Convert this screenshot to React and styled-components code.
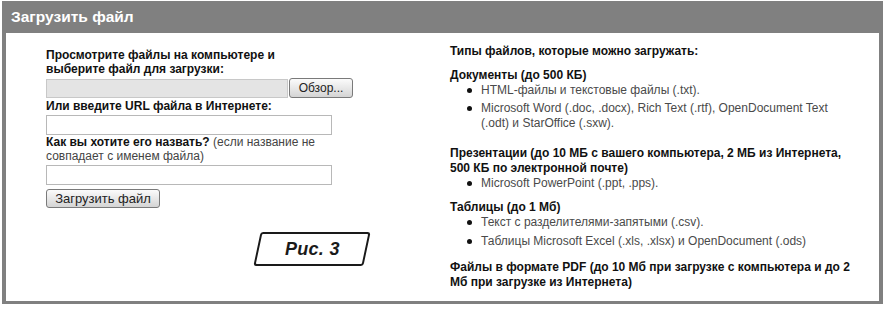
import React from "react";
import styled, { createGlobalStyle } from "styled-components";

const Global = createGlobalStyle`
  html, body { margin: 0; padding: 0; background: #fff; }
  body { font-family: "Liberation Sans", Arial, sans-serif; color: #111; }
`;

const Frame = styled.div`
  width: 881px;
  margin: 1px 0 0 2px;
  background: #808080;
  display: flex;
  flex-direction: column;
`;

const Header = styled.div`
  height: 32px;
  display: flex;
  align-items: center;
  padding-left: 9px;
  color: #fff;
  font-weight: bold;
  font-size: 15.5px;
`;

const Body = styled.div`
  border: solid #808080;
  border-width: 0 4px 3px 4px;
  background: #fff;
  height: 268px;
  display: grid;
  grid-template-columns: 404px 1fr;
  padding-left: 40px;
  overflow: hidden;
`;

const Left = styled.div`
  padding-top: 15px;
  display: flex;
  flex-direction: column;
  align-items: flex-start;
  width: 310px;
`;

const Label = styled.div`
  font-size: 12px;
  line-height: 14px;
  font-weight: bold;
  color: #111;
  margin-top: ${(p) => p.$mt || 0}px;
`;

const Note = styled.span`
  font-weight: normal;
  color: #444;
`;

const FileRow = styled.div`
  display: flex;
  align-items: center;
  gap: 1px;
  margin-top: 2px;
`;

const FileField = styled.div`
  width: 240px;
  height: 17px;
  background: #e4e4e4;
  border: 1px solid #c8c8c8;
`;

const Btn = styled.button`
  font-family: "Liberation Sans", Arial, sans-serif;
  font-size: ${(p) => p.$fs || 12}px;
  color: #222;
  height: ${(p) => p.$h || 19}px;
  width: ${(p) => p.$w}px;
  padding: 0;
  border: 1px solid #7a7a7a;
  border-radius: 3px;
  background: linear-gradient(#fbfbfb, #e6e6e6 55%, #d4d4d4);
  margin-top: ${(p) => p.$mt || 0}px;
`;

const TextField = styled.div`
  width: 284px;
  height: 18px;
  border: 1px solid #b8b8b8;
  background: #fff;
  margin-top: 2px;
`;

const FigWrap = styled.div`
  margin: 24px 0 0 211px;
  width: 106px;
  height: 30px;
  border: 2px solid #1a1a1a;
  border-radius: 3px;
  transform: skewX(-12deg);
  display: flex;
  align-items: center;
  justify-content: center;
`;

const FigText = styled.span`
  transform: skewX(12deg);
  font-size: 18px;
  font-weight: bold;
  font-style: italic;
  color: #1a1a1a;
  letter-spacing: 0.3px;
`;

const Right = styled.div`
  padding-top: 11px;
  padding-right: 8px;
`;

const H = styled.div`
  font-size: 12px;
  line-height: 15px;
  font-weight: bold;
  color: #111;
  margin-top: ${(p) => p.$mt || 0}px;
`;

const List = styled.ul`
  margin: 0;
  padding: 0 0 0 31px;
  list-style: none;
`;

const Item = styled.li`
  position: relative;
  font-size: 12px;
  line-height: 15px;
  color: #4a4a4a;
  margin-top: ${(p) => p.$mt || 0}px;
  &::before {
    content: "";
    position: absolute;
    left: -14px;
    top: 5px;
    width: 5px;
    height: 5px;
    border-radius: 50%;
    background: #111;
  }
`;

export default function App() {
  return (
    <>
      <Global />
      <Frame>
        <Header>Загрузить файл</Header>
        <Body>
          <Left>
            <Label>
              Просмотрите файлы на компьютере и
              <br />
              выберите файл для загрузки:
            </Label>
            <FileRow>
              <FileField />
              <Btn $w={64} $h={20}>Обзор...</Btn>
            </FileRow>
            <Label $mt={1}>Или введите URL файла в Интернете:</Label>
            <TextField />
            <Label $mt={0}>
              Как вы хотите его назвать? <Note>(если название не</Note>
              <br />
              <Note>совпадает с именем файла)</Note>
            </Label>
            <TextField />
            <Btn $w={114} $h={19} $fs={13} $mt={4}>Загрузить файл</Btn>
            <FigWrap>
              <FigText>Рис. 3</FigText>
            </FigWrap>
          </Left>
          <Right>
            <H>Типы файлов, которые можно загружать:</H>
            <H $mt={9}>Документы (до 500 КБ)</H>
            <List>
              <Item>HTML-файлы и текстовые файлы (.txt).</Item>
              <Item $mt={3}>
                Microsoft Word (.doc, .docx), Rich Text (.rtf), OpenDocument Text
                <br />
                (.odt) и StarOffice (.sxw).
              </Item>
            </List>
            <H $mt={15}>
              Презентации (до 10 МБ с вашего компьютера, 2 МБ из Интернета,
              <br />
              500 КБ по электронной почте)
            </H>
            <List>
              <Item>Microsoft PowerPoint (.ppt, .pps).</Item>
            </List>
            <H $mt={9}>Таблицы (до 1 Мб)</H>
            <List>
              <Item>Текст с разделителями-запятыми (.csv).</Item>
              <Item $mt={4}>Таблицы Microsoft Excel (.xls, .xlsx) и OpenDocument (.ods)</Item>
            </List>
            <H $mt={11}>
              Файлы в формате PDF (до 10 Мб при загрузке с компьютера и до 2
              <br />
              Мб при загрузке из Интернета)
            </H>
          </Right>
        </Body>
      </Frame>
    </>
  );
}
